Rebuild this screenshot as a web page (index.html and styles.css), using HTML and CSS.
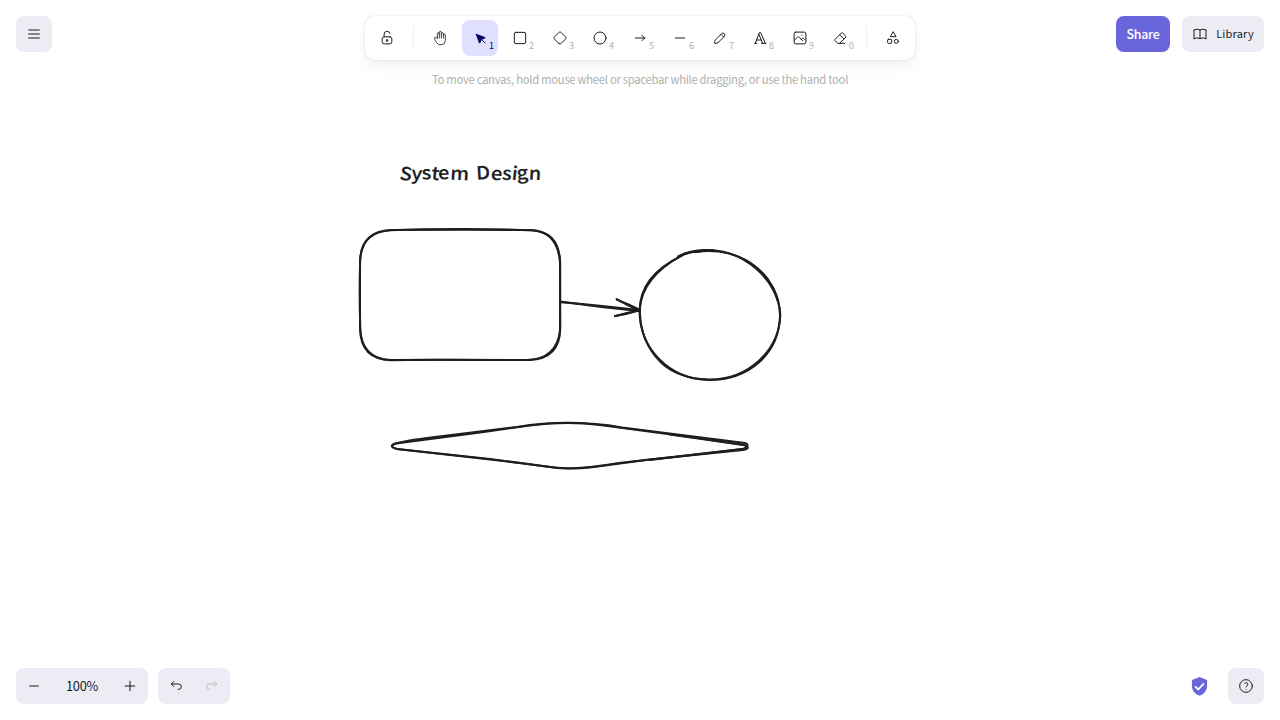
FILE: index.html
```html
<!DOCTYPE html>
<html lang="en">

<head>
    <meta charset="utf-8">
    <title>Whiteboard</title>
    <link rel="stylesheet" href="styles.css">
</head>

<body>
    <svg class="canvas" viewBox="0 0 1280 720">
        <!-- letters are tilted a little so the title looks handwritten -->
        <text class="canvas-title" x="399" y="179.5" textLength="142" lengthAdjust="spacingAndGlyphs" rotate="8 4 -3 5 -4 3 0 -3 5 4 6 -4 3">System Design</text>

        <!-- rectangle -->
        <path d="M391 230 Q470 229.6 530 230 Q558 231 560 263 L560.3 328 Q560 359 529 360 Q460 359.6 391 360 Q361 360 360 329 L360 262 Q361 231 391 230" />
        <path d="M391 230.3 C430 228.3 500 228.6 533 230.4 Q559 232 560.2 262 L560 330 Q557 359 527 360 C490 360.5 430 358.8 390 360.2 Q361 358 360.3 328 Q359 290 360.2 260 Q361 232 391 230.3" />

        <!-- arrow -->
        <path d="M560 301.6 Q600 307.5 639 311" />
        <path d="M561 302.3 Q605 306 638 310" />
        <path d="M616.5 299 Q628 306 639 310.5 Q627 312.5 615 316.3" />
        <path d="M617 299.8 Q629 304.5 640 310 Q628 314 615 316" />

        <!-- ellipse -->
        <path d="M696 252 C741 245 780 275 780 316 C779 354 749 380 709 380 C668 379 640 348 639.5 311 C640 287 653 270 682 255.5 Q692 250.5 713 250" />
        <path d="M678 257 Q688 250.6 703 250 C744 248 779 281 780.3 315 C779 351 748 379.5 710 379.5 C683 379 666 370 656 357 C644 343 639 324 640 308 C642 286 658 269 680 256.5" />
        <path d="M678 256.5 L686 253 M696 252 L706 250.6" />
        <path d="M745 260 Q771 276 777.5 300" />

        <!-- diamond -->
        <path d="M394 444 Q402 441 435 437 L517 427 Q570 418.5 622 427.5 L745 443 Q751 445 743 449 L619 463 Q578 470 557 468 L520 463 L397 449 Q387 446 396 443.5" />
        <path d="M396 443.5 L484 432 L530 425.5 Q567 421 600 425 L690 437 L744 445 Q752 448 743 450 L650 459.5 L590 467.5 Q566 470 543 466 L490 459 L397 449 Q388 446 396 443.5" />
        <path d="M670 434.5 L744 445 M742 449 L650 460" />
    </svg>

    <header class="top-bar">
        <button class="tool soft" title="Menu">
            <svg viewBox="0 0 24 24"><path d="M4 6h16M4 12h16M4 18h16" /></svg>
        </button>

        <nav class="toolbar">
            <button class="tool">
                <svg viewBox="0 0 20 20"><path d="M13.542 8.542H6.458a2.5 2.5 0 0 0-2.5 2.5v3.75a2.5 2.5 0 0 0 2.5 2.5h7.084a2.5 2.5 0 0 0 2.5-2.5v-3.75a2.5 2.5 0 0 0-2.5-2.5Z" /><path d="M10 13.958a1.042 1.042 0 1 0 0-2.083 1.042 1.042 0 0 0 0 2.083Z" /><path d="M6.4 8.5V5.175a3.7 3.5 0 0 1 7.3-.9" /></svg>
            </button>
            <div class="divider"></div>
            <button class="tool">
                <svg class="thin" viewBox="0 0 24 24"><path d="M8 13v-7.5a1.5 1.5 0 0 1 3 0v6.5M11 5.5v-2a1.5 1.5 0 1 1 3 0v8.5M14 5.5a1.5 1.5 0 0 1 3 0v6.5M17 7.5a1.5 1.5 0 0 1 3 0v8.5a6 6 0 0 1-6 6h-2h.208a6 6 0 0 1-5.012-2.7a69.74 69.74 0 0 1-.196-.3c-.312-.479-1.407-2.388-3.286-5.728a1.5 1.5 0 0 1 .536-2.022a1.867 1.867 0 0 1 2.28.28l1.47 1.47" /></svg>
            </button>
            <button class="tool active">
                <svg viewBox="0 0 22 22"><path class="filled" d="M6 6l4.153 11.793a.365.365 0 0 0 .331.207a.366.366 0 0 0 .332-.207l2.184-4.793l4.787-1.994a.355.355 0 0 0 .213-.323a.355.355 0 0 0-.213-.323l-11.787-4.36z" /><path d="M13.5 13.5l4.5 4.5" /></svg>
                <span class="key">1</span>
            </button>
            <button class="tool">
                <svg viewBox="0 0 24 24"><rect x="3.5" y="3.5" width="17" height="17" rx="2.5" /></svg>
                <span class="key">2</span>
            </button>
            <button class="tool">
                <svg viewBox="0 0 24 24"><path d="M10.5 20.4l-6.9-6.9c-.781-.781-.781-2.219 0-3l6.9-6.9c.781-.781 2.219-.781 3 0l6.9 6.9c.781.781.781 2.219 0 3l-6.9 6.9c-.781.781-2.219.781-3 0z" /></svg>
                <span class="key">3</span>
            </button>
            <button class="tool">
                <svg viewBox="0 0 24 24"><circle cx="12" cy="12" r="9" /></svg>
                <span class="key">4</span>
            </button>
            <button class="tool">
                <svg viewBox="0 0 24 24"><path d="M5 12h14M15 16l4-4M15 8l4 4" /></svg>
                <span class="key">5</span>
            </button>
            <button class="tool">
                <svg viewBox="0 0 20 20"><path d="M4.167 10h11.666" /></svg>
                <span class="key">6</span>
            </button>
            <button class="tool">
                <svg viewBox="0 0 20 20"><path d="m7.643 15.69 7.774-7.773a2.357 2.357 0 1 0-3.334-3.334L4.31 12.357a3.333 3.333 0 0 0-.977 2.357v1.953h1.953c.884 0 1.732-.352 2.357-.977Z" /><path d="m11.25 5.417 3.333 3.333" /></svg>
                <span class="key">7</span>
            </button>
            <button class="tool">
                <svg viewBox="0 0 24 24"><path d="M4 20h3M14 20h7M6.9 15h6.9M10.2 6.3L16 20" /><path d="M5 20L11 4h2l7 16" /></svg>
                <span class="key">8</span>
            </button>
            <button class="tool">
                <svg viewBox="0 0 20 20"><path d="M12.5 6.667h.01" /><rect x="2.625" y="2.625" width="14.75" height="14.75" rx="2.284" /><path d="m3.333 12.5 3.334-3.333c.773-.745 1.726-.745 2.5 0l4.166 4.166" /><path d="m11.667 11.667.833-.834c.774-.744 1.726-.744 2.5 0l1.667 1.667" /></svg>
                <span class="key">9</span>
            </button>
            <button class="tool">
                <svg viewBox="0 0 24 24"><path d="M19 20h-10.5l-4.21-4.3a1 1 0 0 1 0-1.41l10-10a1 1 0 0 1 1.41 0l5 5a1 1 0 0 1 0 1.41l-9.2 9.3M18 13.3l-6.3-6.3" /></svg>
                <span class="key">0</span>
            </button>
            <div class="divider"></div>
            <button class="tool">
                <svg viewBox="0 0 24 24"><path d="M12 3l-4 7h8z" /><circle cx="17" cy="17" r="3" /><rect x="4" y="14" width="6" height="6" rx="1" /></svg>
            </button>
        </nav>

        <div class="top-right">
            <button class="share">Share</button>
            <button class="library soft">
                <svg viewBox="0 0 24 24"><path d="M3 19a9 9 0 0 1 9 0a9 9 0 0 1 9 0M3 6a9 9 0 0 1 9 0a9 9 0 0 1 9 0M3 6v13M12 6v13M21 6v13" /></svg>
                <span>Library</span>
            </button>
        </div>
    </header>

    <p class="hint">To move canvas, hold mouse wheel or spacebar while dragging, or use the hand tool</p>

    <footer class="bottom-bar">
        <div class="group">
            <button class="tool"><svg viewBox="0 0 20 20"><path d="M4.5 10h11" /></svg></button>
            <span class="zoom-value">100%</span>
            <button class="tool"><svg viewBox="0 0 20 20"><path d="M10 4v12M4 10h12" /></svg></button>
        </div>
        <div class="group">
            <button class="tool"><svg viewBox="0 0 20 20"><path d="M7.5 10.833 4.167 7.5 7.5 4.167M4.167 7.5h9.166a3.333 3.333 0 0 1 0 6.667H12.5" /></svg></button>
            <button class="tool disabled"><svg viewBox="0 0 20 20"><path d="M12.5 10.833 15.833 7.5 12.5 4.167M15.833 7.5H6.667a3.333 3.333 0 1 0 0 6.667H7.5" /></svg></button>
        </div>

        <div class="bottom-right">
            <svg class="shield" viewBox="0 0 20 20"><path class="shield-body" d="M10 1 L17.2 3.8 V9.5 C17.2 14 14.2 17.4 10 18.8 C5.800 17.400 2.800 14 2.800 9.500 V3.800 Z" /><path class="shield-check" d="M5.8 9.8l3 3l5.400-5.800" /></svg>
            <button class="tool soft" title="Help">
                <svg viewBox="0 0 24 24"><circle cx="12" cy="12" r="9.5" /><path d="M12 17v.01M12 13.5a1.5 1.5 0 0 1 1-1.5a2.6 2.6 0 1 0-3-4" /></svg>
            </button>
        </div>
    </footer>
</body>

</html>
```
FILE: styles.css
```css
* {
    box-sizing: border-box;
}

body {
    margin: 0;
    height: 720px;
    display: flex;
    flex-direction: column;
    overflow: hidden;
    background-color: #fff;
    color: #1b1b1f;
    font-family: "Noto Sans CJK SC", "Open Sans", sans-serif;
}

/* drawing surface, lies under the controls */
.canvas {
    position: absolute;
    top: 0;
    left: 0;
    width: 1280px;
    height: 720px;
    z-index: -1;
    fill: none;
    stroke: #1e1e1e;
    stroke-width: 2;
    stroke-linecap: round;
    stroke-linejoin: round;
}

.canvas-title {
    font-size: 18px;
    font-weight: 500;
    word-spacing: 3px;
    fill: #1e1e1e;
    stroke-width: 0.2;
}

button {
    border: none;
    padding: 0;
    background: none;
    color: inherit;
    font-family: inherit;
}

button svg {
    width: 16px;
    height: 16px;
    fill: none;
    stroke: currentColor;
    stroke-width: 1.5;
    stroke-linecap: round;
    stroke-linejoin: round;
}

button svg[viewBox="0 0 20 20"],
button svg[viewBox="0 0 22 22"] {
    stroke-width: 1.25;
}

button svg.thin {
    stroke-width: 1.25;
}

.filled {
    fill: currentColor;
}

.top-bar {
    display: grid;
    grid-template-columns: 1fr 550px 1fr;
    padding: 16px 16px 0;
}

.tool {
    position: relative;
    width: 36px;
    height: 36px;
    display: flex;
    align-items: center;
    justify-content: center;
    border-radius: 8px;
}

.soft {
    background-color: #ececf4;
}

.toolbar {
    display: flex;
    gap: 4px;
    height: 44px;
    padding: 4px;
    border-radius: 10px;
    background-color: #fff;
    box-shadow: 0 0 1px rgba(0, 0, 0, 0.17), 0 0 3px rgba(0, 0, 0, 0.08), 0 7px 14px rgba(0, 0, 0, 0.05);
}

.divider {
    width: 1px;
    height: 24px;
    margin: 6px 4px;
    background-color: #f1f0ff;
}

.active {
    background-color: #e0dfff;
    color: #030064;
}

.key {
    position: absolute;
    right: 4px;
    bottom: 4px;
    font-size: 9px;
    line-height: 12px;
    color: #b0b0b0;
}

.active .key {
    color: #030064;
}

.top-right {
    display: flex;
    justify-content: flex-end;
    gap: 12px;
    height: 36px;
}

.share {
    width: 54px;
    padding-bottom: 1px;
    border-radius: 8px;
    background-color: #6965db;
    color: #fff;
    font-size: 12.4px;
    font-weight: 500;
    letter-spacing: -0.3px;
}

.library {
    width: 82px;
    display: flex;
    align-items: center;
    justify-content: center;
    gap: 8px;
    border-radius: 8px;
    font-size: 11px;
    letter-spacing: 0.2px;
}

.library span {
    padding-bottom: 2px;
}

.hint {
    margin: 10px 0 0;
    text-align: center;
    font-size: 11.3px;
    line-height: 19px;
    letter-spacing: -0.3px;
    color: #b0b0b0;
}

.bottom-bar {
    display: flex;
    gap: 10px;
    margin-top: auto;
    padding: 0 16px 16px;
}

.group {
    display: flex;
    border-radius: 8px;
    background-color: #ececf4;
}

.zoom-value {
    width: 60px;
    text-align: center;
    font-size: 12.8px;
    line-height: 36px;
    letter-spacing: -0.3px;
}

.disabled {
    color: #bbbbc1;
}

.bottom-right {
    display: flex;
    align-items: center;
    gap: 18px;
    margin-left: auto;
}

.shield {
    width: 21px;
    height: 21px;
}

.shield-body {
    fill: #6965db;
}

.shield-check {
    fill: none;
    stroke: #fff;
    stroke-width: 1.6;
}
```
